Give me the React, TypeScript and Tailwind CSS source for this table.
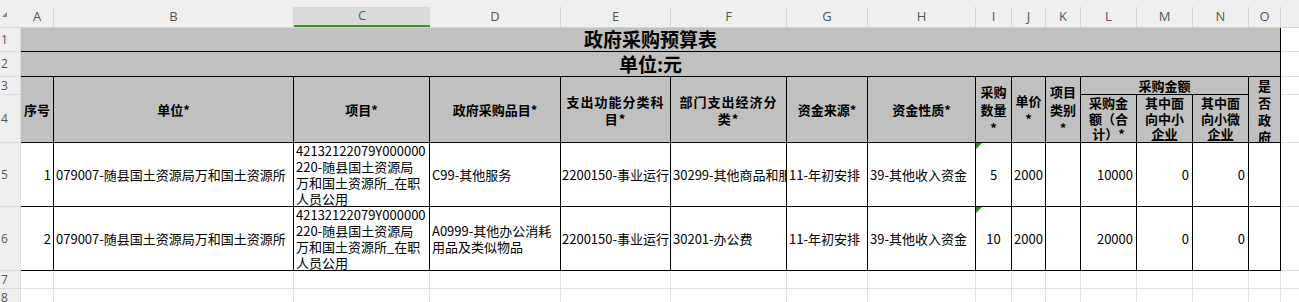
const cols = ["A", "B", "C", "D", "E", "F", "G", "H", "I", "J", "K", "L", "M", "N", "O"];

const colStart = [
  "col-start-2",
  "col-start-3",
  "col-start-4",
  "col-start-5",
  "col-start-6",
  "col-start-7",
  "col-start-8",
  "col-start-9",
  "col-start-10",
  "col-start-11",
  "col-start-12",
  "col-start-13",
  "col-start-14",
  "col-start-15",
  "col-start-16",
];

const rowStart = ["row-start-1", "row-start-2", "row-start-3", "row-start-4", "row-start-5", "row-start-6", "row-start-7", "row-start-8", "row-start-9"];

const font = { fontFamily: '"Noto Sans CJK SC", "Noto Sans", sans-serif' };

const rows = [
  {
    no: "1",
    unit: "079007-随县国土资源局万和国土资源所",
    item: ["42132122079Y000000", "220-随县国土资源局", "万和国土资源所_在职", "人员公用"],
    cat: ["C99-其他服务"],
    func: "2200150-事业运行",
    econ: "30299-其他商品和服务支出",
    src: "11-年初安排",
    nature: "39-其他收入资金",
    qty: "5",
    price: "2000",
    total: "10000",
  },
  {
    no: "2",
    unit: "079007-随县国土资源局万和国土资源所",
    item: ["42132122079Y000000", "220-随县国土资源局", "万和国土资源所_在职", "人员公用"],
    cat: ["A0999-其他办公消耗", "用品及类似物品"],
    func: "2200150-事业运行",
    econ: "30201-办公费",
    src: "11-年初安排",
    nature: "39-其他收入资金",
    qty: "10",
    price: "2000",
    total: "20000",
  },
];

const black = "border-r border-b border-black";
const grid = "border-r border-b border-[#e1e1e1]";
// header cell base: justify and leading are set per cell
const head = "bg-[#c0c0c0] font-bold text-[13px] text-black flex items-center text-center overflow-hidden";
const data = "bg-white text-[13px] leading-[16px] text-black flex items-center overflow-hidden whitespace-nowrap";

function GreenMark() {
  return <span className="absolute left-0 top-0 w-0 h-0 border-t-[6px] border-r-[6px] border-t-[#2b8a2b] border-r-transparent" />;
}

export default function App() {
  return (
    <div className="w-[1299px] h-[302px] overflow-hidden bg-white" style={font}>
      <div className="grid grid-cols-[21px_33px_240px_136px_131px_110px_116px_81px_108px_36px_34px_35px_56px_56px_56px_32px_1fr] grid-rows-[28px_24px_25px_18px_48px_64px_64px_18px_18px]">
        {/* corner */}
        <div className="col-start-1 row-start-1 bg-[#efefef] border-b border-[#d4d4d4] flex items-end">
          <svg width="8" height="8" viewBox="0 0 8 8" className="ml-[1px] mb-[8px]">
            <path d="M6 1 L6 6 L1 6 Z" fill="#8a8a8a" />
          </svg>
        </div>

        {/* column letters */}
        {cols.map((c, i) => (
          <div key={c} className={`${colStart[i]} row-start-1 bg-[#efefef] border-b border-[#d4d4d4] flex flex-col justify-end`}>
            {c === "C" ? (
              <div className="h-[20px] bg-[#dadada] border-b-2 border-[#3a8f25] flex items-center justify-center text-[13px] text-[#1d7a7a]" style={{ fontFamily: '"Open Sans", sans-serif' }}>
                {c}
              </div>
            ) : (
              <div className="h-[20px] border-r border-[#d4d4d4] flex items-center justify-center text-[13px] text-[#555]" style={{ fontFamily: '"Open Sans", sans-serif' }}>
                {c}
              </div>
            )}
          </div>
        ))}
        <div className="col-start-17 row-start-1 bg-[#efefef] border-b border-[#d4d4d4]" />

        {/* row numbers */}
        {["1", "2", "3", "4", "5", "6", "7", "8"].map((n, i) => (
          <div key={n} className={`col-start-1 ${rowStart[i + 1]} bg-[#efefef] border-b border-r border-[#dcdcdc] flex items-center pl-[1px] text-[12px] text-[#555]`} style={{ fontFamily: '"Open Sans", sans-serif' }}>
            {n}
          </div>
        ))}

        {/* title rows */}
        <div className={`col-start-2 col-span-15 row-start-2 ${black} bg-[#c0c0c0] flex items-center justify-center text-[19px] font-bold`}>政府采购预算表</div>
        <div className={`col-start-2 col-span-15 row-start-3 ${black} bg-[#c0c0c0] flex items-center justify-center text-[19px] font-bold`}>单位:元</div>

        {/* header */}
        <div className={`col-start-2 row-start-4 row-span-2 ${black} ${head} justify-center`}>序号</div>
        <div className={`col-start-3 row-start-4 row-span-2 ${black} ${head} justify-center`}>单位*</div>
        <div className={`col-start-4 row-start-4 row-span-2 ${black} ${head} justify-center`}>项目*</div>
        <div className={`col-start-5 row-start-4 row-span-2 ${black} ${head} justify-center`}>政府采购品目*</div>
        <div className={`col-start-6 row-start-4 row-span-2 ${black} ${head} flex-col justify-center leading-[17px] tracking-[1px]`}>
          <span>支出功能分类科</span>
          <span>目*</span>
        </div>
        <div className={`col-start-7 row-start-4 row-span-2 ${black} ${head} flex-col justify-center leading-[17px] tracking-[1px]`}>
          <span>部门支出经济分</span>
          <span>类*</span>
        </div>
        <div className={`col-start-8 row-start-4 row-span-2 ${black} ${head} justify-center`}>资金来源*</div>
        <div className={`col-start-9 row-start-4 row-span-2 ${black} ${head} justify-center`}>资金性质*</div>
        <div className={`col-start-10 row-start-4 row-span-2 ${black} ${head} flex-col justify-center leading-[18px]`}>
          <span>采购</span>
          <span>数量</span>
          <span>*</span>
        </div>
        <div className={`col-start-11 row-start-4 row-span-2 ${black} ${head} flex-col justify-center leading-[18px]`}>
          <span>单价</span>
          <span>*</span>
        </div>
        <div className={`col-start-12 row-start-4 row-span-2 ${black} ${head} flex-col justify-center leading-[18px]`}>
          <span>项目</span>
          <span>类别</span>
          <span>*</span>
        </div>
        <div className={`col-start-13 col-span-3 row-start-4 ${black} ${head} justify-center`}>采购金额</div>
        <div className={`col-start-13 row-start-5 ${black} ${head} flex-col justify-start leading-[15.5px]`}>
          <span>采购金</span>
          <span>额（合</span>
          <span>计）*</span>
        </div>
        <div className={`col-start-14 row-start-5 ${black} ${head} flex-col justify-start leading-[15.5px]`}>
          <span>其中面</span>
          <span>向中小</span>
          <span className="underline">企业</span>
        </div>
        <div className={`col-start-15 row-start-5 ${black} ${head} flex-col justify-start leading-[15.5px]`}>
          <span>其中面</span>
          <span>向小微</span>
          <span className="underline">企业</span>
        </div>
        <div className={`col-start-16 row-start-4 row-span-2 ${black} ${head} flex-col justify-start leading-[17px]`}>
          <span>是</span>
          <span>否</span>
          <span>政</span>
          <span>府</span>
        </div>

        {/* data rows */}
        {rows.map((r, i) => {
          const rs = i === 0 ? "row-start-6" : "row-start-7";
          return [
            <div key={`a${i}`} className={`col-start-2 ${rs} ${black} ${data} justify-end pr-[2px]`}>{r.no}</div>,
            <div key={`b${i}`} className={`col-start-3 ${rs} ${black} ${data} pl-[2px]`}>{r.unit}</div>,
            <div key={`c${i}`} className={`col-start-4 ${rs} ${black} ${data} flex-col items-start justify-start pl-[2px]`}>
              {r.item.map((l) => (
                <span key={l}>{l}</span>
              ))}
            </div>,
            <div key={`d${i}`} className={`col-start-5 ${rs} ${black} ${data} flex-col items-start justify-center pl-[2px]`}>
              {r.cat.map((l) => (
                <span key={l}>{l}</span>
              ))}
            </div>,
            <div key={`e${i}`} className={`col-start-6 ${rs} ${black} ${data} pl-[1px]`}>{r.func}</div>,
            <div key={`f${i}`} className={`col-start-7 ${rs} ${black} ${data} pl-[2px]`}>{r.econ}</div>,
            <div key={`g${i}`} className={`col-start-8 ${rs} ${black} ${data} pl-[2px]`}>{r.src}</div>,
            <div key={`h${i}`} className={`col-start-9 ${rs} ${black} ${data} pl-[2px]`}>{r.nature}</div>,
            <div key={`i${i}`} className={`col-start-10 ${rs} ${black} ${data} justify-center relative`}>
              <GreenMark />
              {r.qty}
            </div>,
            <div key={`j${i}`} className={`col-start-11 ${rs} ${black} ${data} pl-[2px]`}>{r.price}</div>,
            <div key={`k${i}`} className={`col-start-12 ${rs} ${black} ${data}`} />,
            <div key={`l${i}`} className={`col-start-13 ${rs} ${black} ${data} justify-end pr-[3px]`}>{r.total}</div>,
            <div key={`m${i}`} className={`col-start-14 ${rs} ${black} ${data} justify-end pr-[3px]`}>0</div>,
            <div key={`n${i}`} className={`col-start-15 ${rs} ${black} ${data} justify-end pr-[3px]`}>0</div>,
            <div key={`o${i}`} className={`col-start-16 ${rs} ${black} ${data}`} />,
          ];
        })}

        {/* filler column P */}
        {["row-start-2", "row-start-3", "row-start-4", "row-start-5", "row-start-6", "row-start-7", "row-start-8", "row-start-9"].map((r) => (
          <div key={r} className={`col-start-17 ${r} border-b border-[#e1e1e1]`} />
        ))}

        {/* empty rows 7, 8 */}
        {["row-start-8", "row-start-9"].map((r) =>
          colStart.map((c) => <div key={`${r}${c}`} className={`${c} ${r} ${grid}`} />)
        )}
      </div>
    </div>
  );
}
